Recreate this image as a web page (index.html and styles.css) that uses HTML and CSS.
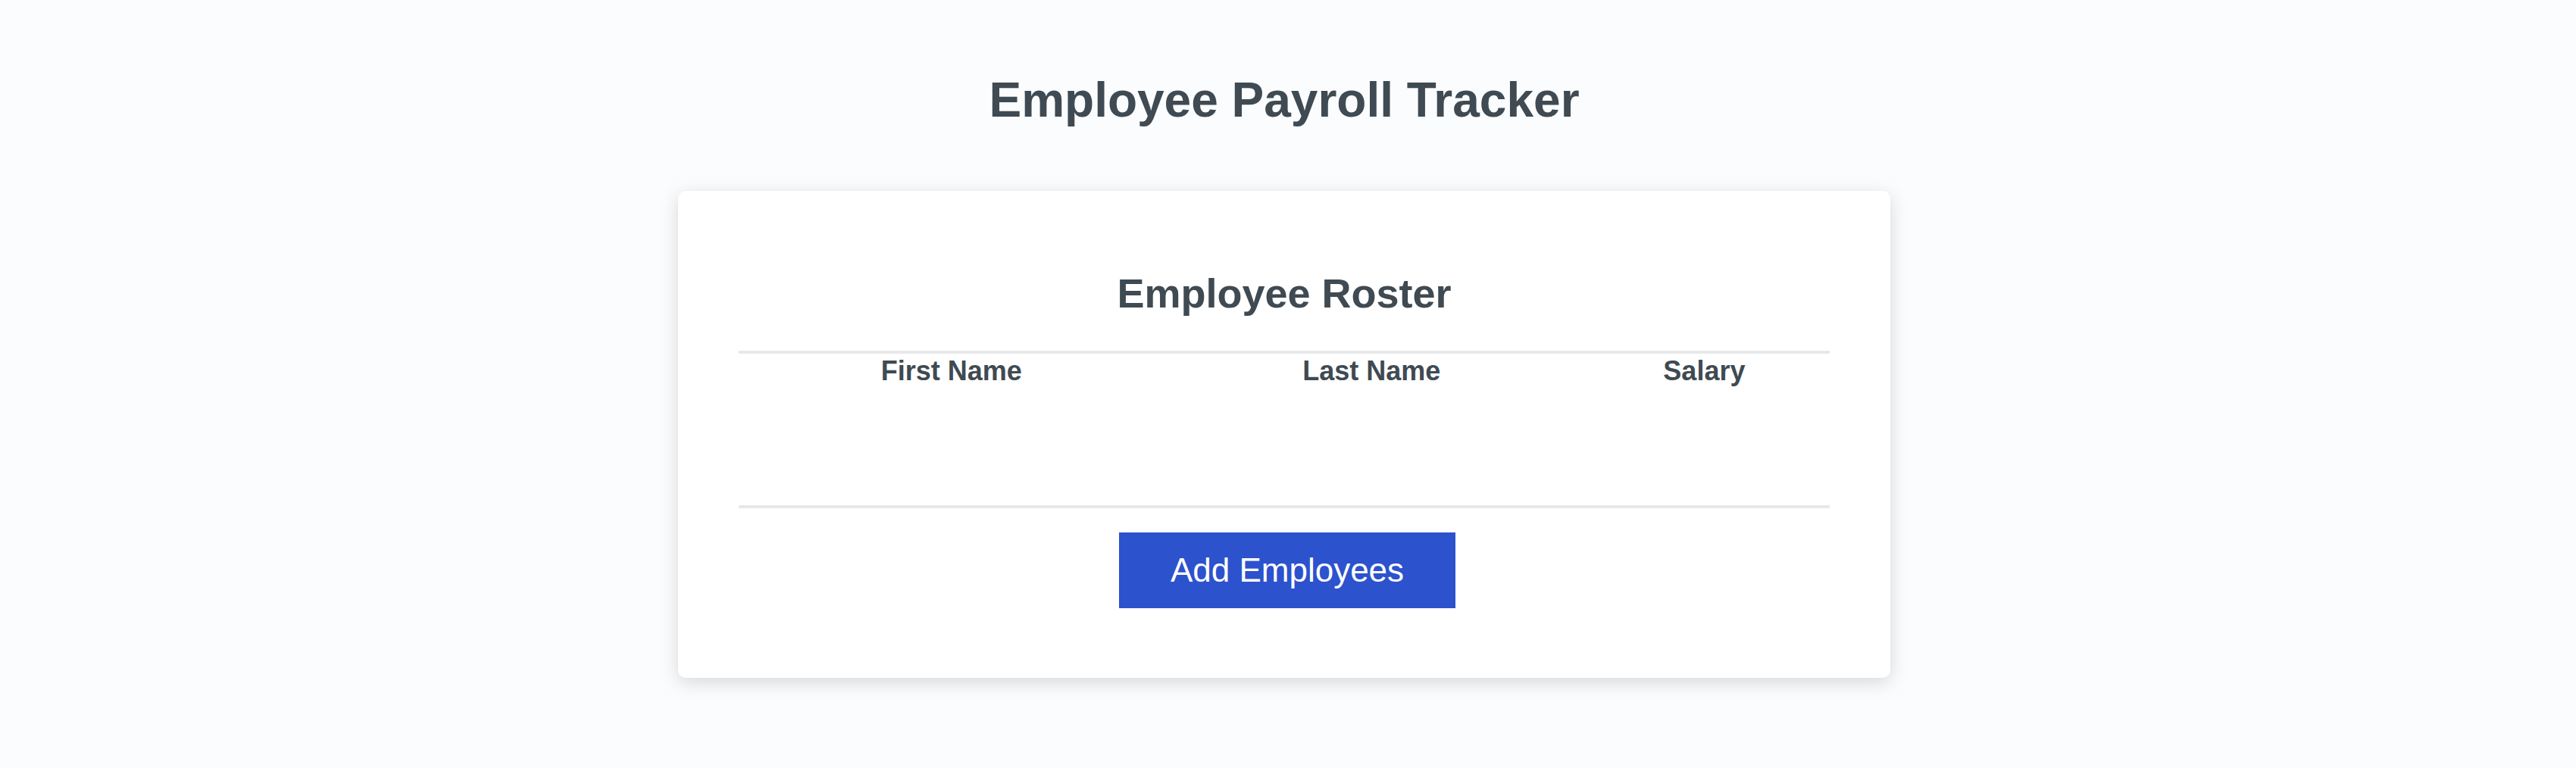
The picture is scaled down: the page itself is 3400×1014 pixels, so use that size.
FILE: index.html
```html
<!DOCTYPE html>
<html lang="en">
<head>
<meta charset="utf-8">
<meta name="viewport" content="width=device-width, initial-scale=1">
<title>Employee Payroll Tracker</title>
<link rel="stylesheet" href="styles.css">
</head>
<body>
<header class="page-header">
  <h1 class="page-title">Employee Payroll Tracker</h1>
</header>
<main class="card">
  <h2 class="card-title" id="roster-title">Employee Roster</h2>
  <div class="table-wrapper">
    <table class="roster" aria-labelledby="roster-title">
      <colgroup>
        <col class="col-first">
        <col class="col-last">
        <col class="col-salary">
      </colgroup>
      <thead>
        <tr>
          <th scope="col">First Name</th>
          <th scope="col">Last Name</th>
          <th scope="col">Salary</th>
        </tr>
      </thead>
      <tbody></tbody>
    </table>
  </div>
  <div class="actions">
    <button type="button" class="add-button">Add Employees</button>
  </div>
</main>
</body>
</html>
```
FILE: styles.css
```css
* {
  box-sizing: border-box;
}

body {
  margin: 0;
  padding: 0 10px 40px 0;
  background: #fafcfe;
  color: #3f4a52;
  font-family: "Liberation Sans", Helvetica, Arial, sans-serif;
  font-size: 36px;
}

.page-header {
  padding: 92px 40px 80px;
  text-align: center;
}

.page-title {
  margin: 0;
  font-size: 64px;
  line-height: 80px;
}

.card {
  max-width: 1600px;
  margin: 0 auto;
  padding: 101px 80px 92px;
  background: #fff;
  border-radius: 10px;
  box-shadow: 0 6px 24px rgba(0, 0, 0, 0.15);
}

.card-title {
  margin: 0 0 42px;
  font-size: 54px;
  line-height: 68px;
  text-align: center;
}

.table-wrapper {
  min-height: 208px;
  border-top: 4px solid #e6e8ea;
  border-bottom: 4px solid #e6e8ea;
}

.roster {
  width: 100%;
  border-collapse: collapse;
  table-layout: fixed;
}

.col-first {
  width: 39%;
}

.col-last {
  width: 38%;
}

.col-salary {
  width: 23%;
}

.roster th {
  padding: 0;
  line-height: 46px;
  text-align: center;
}

.actions {
  display: flex;
  justify-content: center;
  padding: 32px 0 0 8px;
}

.add-button {
  padding: 20px 68px;
  border: 0;
  background: #2c52cd;
  color: #fff;
  font-family: inherit;
  font-size: 44px;
  line-height: 60px;
  cursor: pointer;
}
```
